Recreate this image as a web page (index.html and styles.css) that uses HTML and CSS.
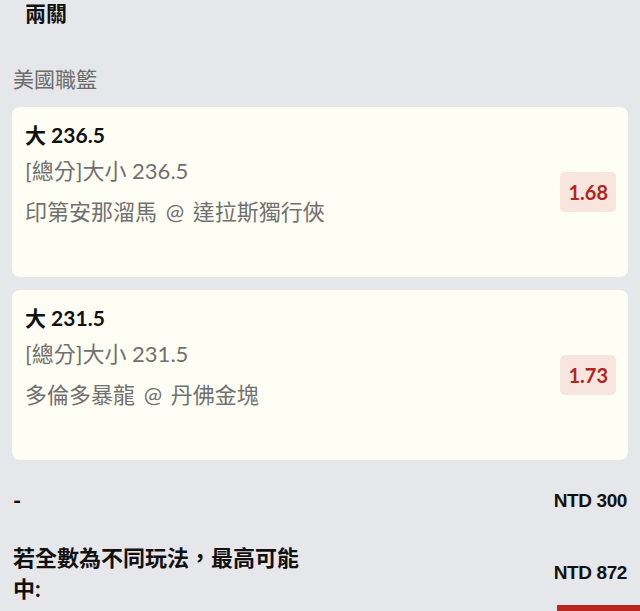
FILE: index.html
```html
<!DOCTYPE html>
<html lang="zh-Hant">
<head>
    <meta charset="UTF-8">
    <title>兩關</title>
    <link rel="stylesheet" href="styles.css">
</head>
<body>

    <h1 class="page-title">兩關</h1>

    <div class="league">美國職籃</div>

    <div class="bet-card">
        <div class="bet-info">
            <div class="bet-pick">大 236.5</div>
            <div class="bet-market">[總分]大小 236.5</div>
            <div class="bet-match">印第安那溜馬 @ 達拉斯獨行俠</div>
        </div>
        <div class="odds">1.68</div>
    </div>

    <div class="bet-card">
        <div class="bet-info">
            <div class="bet-pick">大 231.5</div>
            <div class="bet-market">[總分]大小 231.5</div>
            <div class="bet-match">多倫多暴龍 @ 丹佛金塊</div>
        </div>
        <div class="odds">1.73</div>
    </div>

    <div class="summary">
        <div class="summary-row">
            <span class="summary-label">-</span>
            <span class="summary-value">NTD 300</span>
        </div>
        <div class="summary-row">
            <span class="summary-label wide">若全數為不同玩法，最高可能中:</span>
            <span class="summary-value">NTD 872</span>
        </div>
        <div class="action-row">
            <button class="confirm-btn"></button>
        </div>
    </div>

</body>
</html>
```

FILE: styles.css
```css
html {
    overflow: hidden;
}
body {
    font-family: Lato, "Noto Sans CJK TC", sans-serif;
    margin: 0;
    background-color: #e6e7ea;
    color: #111;
}
.page-title {
    font-size: 21px;
    font-weight: bold;
    line-height: 26px;
    margin: 0;
    padding-left: 25px;
}
.league {
    font-size: 21px;
    line-height: 30px;
    color: #6b6b6b;
    padding-left: 13px;
    margin-top: 38px;
    margin-bottom: 13px;
}
.bet-card {
    display: flex;
    align-items: center;
    justify-content: space-between;
    background-color: #fffef5;
    border-radius: 8px;
    margin: 0 12px 13px 12px;
    padding: 14px 12px 50px 13px;
    height: 106px;
}
.bet-pick {
    font-size: 21px;
    font-weight: bold;
    line-height: 28px;
}
.bet-market {
    font-size: 22px;
    line-height: 30px;
    color: #707070;
    margin-top: 7px;
}
.bet-match {
    font-size: 22px;
    line-height: 30px;
    color: #707070;
    margin-top: 11px;
    word-spacing: 3px;
}
.odds {
    align-self: flex-start;
    margin-top: 51px;
    background-color: #f8e5de;
    color: #b3261e;
    font-size: 20px;
    font-weight: bold;
    line-height: 40px;
    padding: 0 8px;
    border-radius: 5px;
}
.summary {
    padding: 12px 13px 0 13px;
}
.summary-row {
    display: flex;
    align-items: center;
    justify-content: space-between;
    margin-bottom: 26px;
}
.summary-label {
    font-size: 22px;
    font-weight: bold;
    line-height: 31px;
}
.summary-label.wide {
    max-width: 300px;
}
.summary-value {
    font-family: "Liberation Sans", Arial, sans-serif;
    font-size: 19px;
    font-weight: bold;
    letter-spacing: -0.4px;
}
.action-row {
    display: flex;
    justify-content: flex-end;
    margin-top: -25px;
    margin-right: -13px;
}
.confirm-btn {
    width: 83px;
    height: 40px;
    border: none;
    background-color: #b8261e;
    cursor: pointer;
}
```
